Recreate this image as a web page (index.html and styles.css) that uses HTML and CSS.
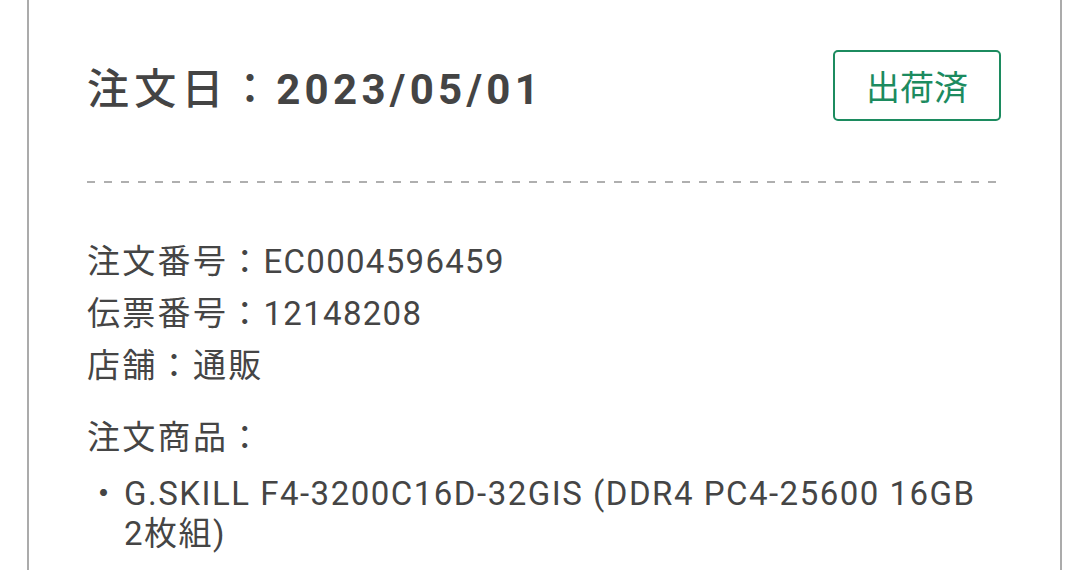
FILE: index.html
```html
<!DOCTYPE html>
<html lang="ja">
<head>
<meta charset="utf-8">
<link rel="stylesheet" href="styles.css">
</head>
<body>
<div class="card">
  <div class="head">
    <h1 class="date"><span class="date-label">注文日：</span>2023/05/01</h1>
    <span class="badge">出荷済</span>
  </div>
  <div class="divider"></div>
  <div class="info">
    <div class="row"><span class="key">注文番号：</span>EC0004596459</div>
    <div class="row"><span class="key">伝票番号：</span>12148208</div>
    <div class="row"><span class="key">店舗：通販</span></div>
  </div>
  <div class="products">
    <div class="label"><span class="key">注文商品：</span></div>
    <ul class="items">
      <li class="item"><span class="dot">・</span><span class="name">G.SKILL F4-3200C16D-32GIS (DDR4 PC4-25600 16GB <span class="nowrap">2枚組)</span></span></li>
    </ul>
  </div>
</div>
</body>
</html>
```
FILE: styles.css
```css
html, body {
  margin: 0;
  padding: 0;
  background: #fff;
  height: 100%;
  overflow: hidden;
}
body {
  font-family: Roboto, "Noto Sans CJK JP", sans-serif;
  color: #454545;
}
.card {
  margin-left: 27px;
  width: 1035px;
  box-sizing: border-box;
  border-left: 2.5px solid #ababab;
  border-right: 2.5px solid #ababab;
  padding: 50px 59px 0 58px;
  min-height: 100%;
}
.head {
  display: flex;
  align-items: center;
  justify-content: space-between;
  height: 71px;
}
.date {
  margin: 0;
  font-size: 42px;
  font-weight: 700;
  letter-spacing: 4.3px;
  color: #444;
}
.date-label {
  font-weight: 500;
  letter-spacing: 5.3px;
}
.badge {
  box-sizing: border-box;
  width: 168px;
  height: 71px;
  border: 2.5px solid #1c8b5f;
  border-radius: 5px;
  color: #1c8b5f;
  font-size: 34px;
  display: flex;
  align-items: center;
  justify-content: center;
}
.divider {
  margin-top: 60px;
  height: 2px;
  background: repeating-linear-gradient(to right, #afafaf 0 8px, transparent 8px 17px);
}
.info {
  margin-top: 53px;
  font-size: 33px;
  line-height: 52px;
  letter-spacing: 1.3px;
}
.key {
  letter-spacing: 2.3px;
}
.products {
  margin-top: 20px;
  font-size: 33px;
  letter-spacing: 1.3px;
}
.label {
  line-height: 52px;
}
.items {
  list-style: none;
  margin: 10px 0 0;
  padding: 0;
}
.item {
  display: flex;
  line-height: 40px;
}
.dot {
  flex: none;
  width: 37px;
  letter-spacing: 0;
}
.name {
  flex: 1;
  letter-spacing: 1.5px;
}
.nowrap {
  white-space: nowrap;
}
```
